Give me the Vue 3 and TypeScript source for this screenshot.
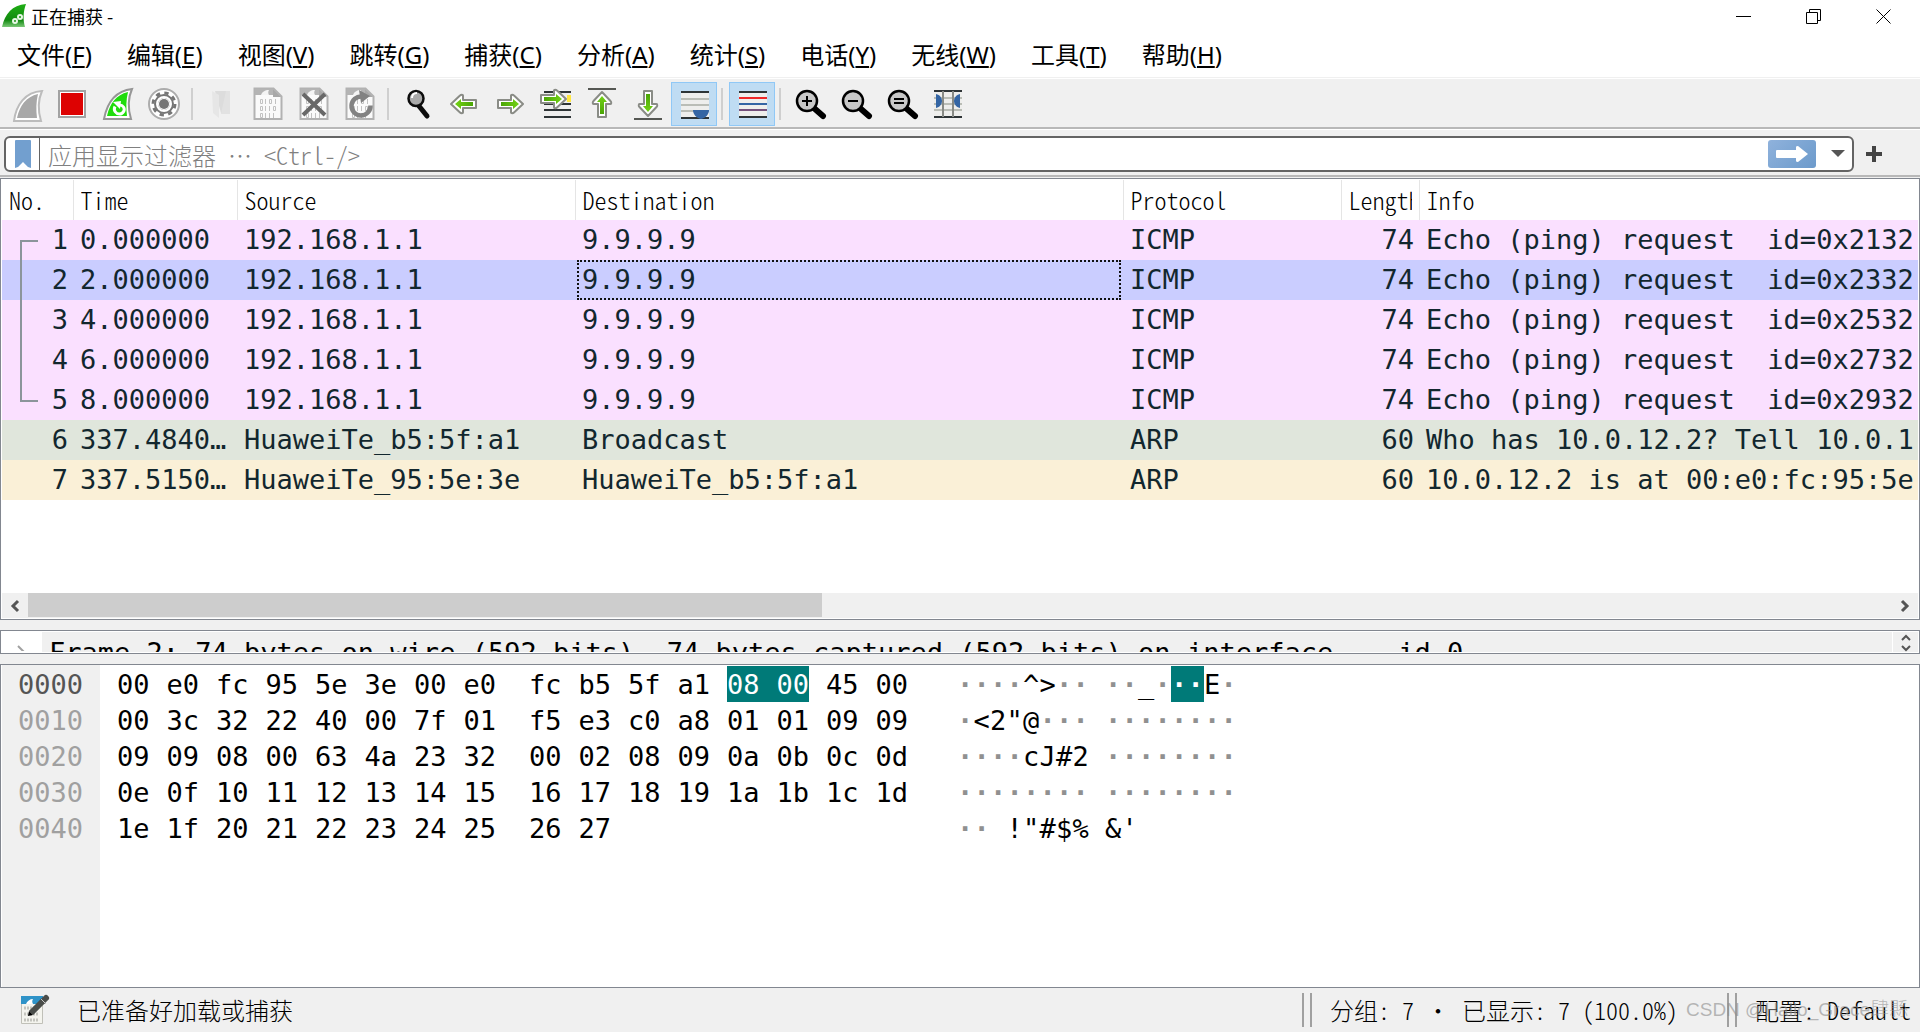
<script setup lang="ts">
interface Tool {
  id: string
  label: string
  art: string
  active?: boolean
  disabled?: boolean
}

interface Packet {
  no: number
  time: string
  source: string
  destination: string
  protocol: string
  length: number
  info: string
  tone: string
}

interface HexRow {
  offset: string
  bytes: string[][]
  text: string[][]
}

const menus = [
  ['文件', 'F'], ['编辑', 'E'], ['视图', 'V'], ['跳转', 'G'], ['捕获', 'C'], ['分析', 'A'],
  ['统计', 'S'], ['电话', 'Y'], ['无线', 'W'], ['工具', 'T'], ['帮助', 'H'],
]

const page = '<path d="M2.500 .5h19l8 8v22.500h-27z" fill="#fafafa" stroke="#b2b2b2" stroke-width="2"/><path d="M3 1h18v6H3z" fill="#b4b4b4"/><path d="M9 7c1-3 4-5 8-5-1 2-1 3 0 5z" fill="#f4f4f4"/><path d="M21 1v8h8z" fill="#a8a8a8"/>'
const bits = '<g fill="none" stroke="#c2c2c2" stroke-width="1"><path d="M8.500 11.500h2v4h-2zM13.500 11v5M17.500 11.500h2v4h-2zM23.500 11v5M8.500 18.500h2v4h-2zM13.500 18v5M17.500 18v5M21.500 18.500h2v4h-2zM8.500 25.500h2v4h-2zM13.500 25v5M17.500 25v5M21.500 25v5"/></g>'
const lens = '<path d="M21 21l8 7" stroke="#000" stroke-width="6" stroke-linecap="round"/><circle cx="13" cy="13" r="10" fill="#c8c8c8" stroke="#000" stroke-width="2.500"/>'
const rightArrow = (x: number, y: number): string =>
  `<g transform="translate(${x} ${y})"><path d="M1 6h13V1.500c0-1 2-1 3 0l9 8.500-9 8.500c-1 1-3 1-3 0V14H1z" fill="#fff" stroke="#8a8c86" stroke-width="2" stroke-linejoin="round"/><path d="M4 8h12V5l6 5-6 5v-3H4z" fill="url(#leaf)"/></g>`

const groups: Tool[][] = [
  [
    { id: 'start', label: '开始捕获分组', disabled: true, art: '<path d="M4 33C6 17 15 4 32 3c-4 9-4 20-1 30z" fill="#fff" stroke="#bcbcbc" stroke-width="2"/><path d="M7 30C10 17 16 9 28 6c-2 8-2 16-1 24z" fill="#a8a8a8"/>' },
    { id: 'stop', label: '停止捕获分组', art: '<path d="M3 3h26v26H3z" fill="#fff" stroke="#a2a2a2" stroke-width="2"/><path d="M5 5h22v22H5z" fill="#dd0202"/>' },
    { id: 'restart', label: '重新开始当前捕获', art: '<path d="M2 31C5 15 13 3 30 1c-4 9-4 20-1 30z" fill="#fff" stroke="#969696" stroke-width="2"/><path d="M5 28C8 15 14 7 26 4c-2 8-2 16-1 24z" fill="#1fdc0c"/><path d="M13 18.500c-2 4 1 7.500 4.500 7.500s6-4 4-7c-1-1.500-2-2-4-2" fill="none" stroke="#fff" stroke-width="3"/><path d="M11 14l8-1-1 8z" fill="#fff"/>' },
    { id: 'options', label: '捕获选项', art: '<circle cx="16" cy="16" r="15" fill="#fff" stroke="#acacac" stroke-width="2"/><circle cx="16" cy="16" r="8" fill="none" stroke="#767676" stroke-width="4"/><circle cx="16" cy="16" r="11" fill="none" stroke="#767676" stroke-width="3" stroke-dasharray="4.300 4.340"/><circle cx="16" cy="16" r="5" fill="#767676"/><circle cx="16" cy="16" r="7" fill="none" stroke="#fff" stroke-width="2"/>' },
  ],
  [
    { id: 'open', label: '打开', disabled: true, art: '<path d="M9 3h14v22h-8z" fill="#dcdcdc"/><path d="M6 3l7 4v23l-6-5z" fill="#e6e6e6"/><path d="M20 3h4v23h-9z" fill="#e2e2e2"/>' },
    { id: 'save', label: '保存', disabled: true, art: page + bits },
    { id: 'close', label: '关闭', art: page + bits + '<path d="M5 6l22 21M27 6L5 27" stroke="#686868" stroke-width="4"/>' },
    { id: 'reload', label: '重新加载', art: page + bits + '<path d="M18 8.500a9.500 9.500 0 1 0 8.500 9" fill="none" stroke="#828282" stroke-width="4.500"/><path d="M15 2l11 6-9 7z" fill="#828282"/>' },
  ],
  [
    { id: 'find', label: '查找分组', art: '<path d="M17 18l8 10" stroke="#0c0c0c" stroke-width="5" stroke-linecap="round"/><circle cx="14" cy="10.500" r="7.500" fill="#a9a9a9" stroke="#0c0c0c" stroke-width="2.500"/><path d="M10 10c0-3 2-5 5-5" fill="none" stroke="#fff" stroke-width="2"/>' },
    { id: 'back', label: '后退', art: `<g transform="translate(32 0) scale(-1 1)">${rightArrow(3, 6)}</g>` },
    { id: 'forward', label: '前进', art: rightArrow(3, 6) },
    { id: 'goto', label: '转到分组', art: '<path d="M4 3h27v26H4z" fill="#eee"/><path d="M27 7h4v7h-4z" fill="#ffe640"/><path d="M4 4h27M4 16h27M4 22h27M4 29h27" stroke="#2e3436" stroke-width="2"/>' + rightArrow(0, 1) },
    { id: 'first', label: '首个分组', art: `<path d="M2 1h28" stroke="#555753" stroke-width="2"/><g transform="matrix(0 -1 1 0 6 32)">${rightArrow(2, 0)}</g>` },
    { id: 'last', label: '最新分组', art: `<path d="M2 31h28" stroke="#555753" stroke-width="2"/><g transform="matrix(0 1 -1 0 26 0)">${rightArrow(2, 0)}</g>` },
    { id: 'autoscroll', label: '自动滚动', active: true, art: '<path d="M3 4h28v26H3z" fill="#eeeeec"/><path d="M3 11h28M3 17h28M3 23h28" stroke="#babdb6" stroke-width="2"/><path d="M3 4h28M3 30h28" stroke="#2e3436" stroke-width="2"/><path d="M15 22h16c0 4-3 8-8 9-5-1-8-5-8-9z" fill="#3465a4"/>' },
  ],
  [
    { id: 'colorize', label: '着色分组列表', active: true, art: '<path d="M3 4h28v25H3z" fill="#eeeeec"/><path d="M3 4h28M3 29h28" stroke="#2e3436" stroke-width="2"/><path d="M3 10h28" stroke="#ef2929" stroke-width="2"/><path d="M3 16h28" stroke="#3465a4" stroke-width="2"/><path d="M3 22h28" stroke="#75507b" stroke-width="2"/>' },
  ],
  [
    { id: 'zoomin', label: '放大', art: lens + '<path d="M13 8v10M8 13h10" stroke="#000" stroke-width="2"/>' },
    { id: 'zoomout', label: '缩小', art: lens + '<path d="M8 13h10" stroke="#000" stroke-width="2"/>' },
    { id: 'zoomreset', label: '正常大小', art: lens + '<path d="M8 11h10M8 15h10" stroke="#000" stroke-width="2"/>' },
    { id: 'resize', label: '调整列宽', art: '<path d="M2 3h28v26H2z" fill="#eeeeec"/><path d="M2 10h28M2 16h28M2 22h28" stroke="#babdb6" stroke-width="2"/><path d="M2 3h28M2 29h28" stroke="#2e3436" stroke-width="2"/><path d="M11 3v26M21 3v26" stroke="#888a85" stroke-width="2"/><path d="M4 6c4 1 6 4 6 7s-2 6-6 7zM28 6c-4 1-6 4-6 7s2 6 6 7z" fill="#3465a4"/>' },
  ],
]

const columns = [
  { key: 'no', label: 'No.' }, { key: 'time', label: 'Time' }, { key: 'source', label: 'Source' },
  { key: 'destination', label: 'Destination' }, { key: 'protocol', label: 'Protocol' },
  { key: 'length', label: 'Length' }, { key: 'info', label: 'Info' },
]

const ping = (no: number, time: string, id: string, tone: string): Packet => ({
  no, time, source: '192.168.1.1', destination: '9.9.9.9', protocol: 'ICMP', length: 74,
  info: `Echo (ping) request  id=${id}`, tone,
})

const packets: Packet[] = [
  ping(1, '0.000000', '0x2132', 'icmp flow flow-start'),
  ping(2, '2.000000', '0x2332', 'selected flow'),
  ping(3, '4.000000', '0x2532', 'icmp flow'),
  ping(4, '6.000000', '0x2732', 'icmp flow'),
  ping(5, '8.000000', '0x2932', 'icmp flow flow-end'),
  { no: 6, time: '337.4840…', source: 'HuaweiTe_b5:5f:a1', destination: 'Broadcast', protocol: 'ARP', length: 60, info: 'Who has 10.0.12.2? Tell 10.0.1', tone: 'broadcast' },
  { no: 7, time: '337.5150…', source: 'HuaweiTe_95:5e:3e', destination: 'HuaweiTe_b5:5f:a1', protocol: 'ARP', length: 60, info: '10.0.12.2 is at 00:e0:fc:95:5e', tone: 'arp' },
]

const row = (offset: string, left: string, right: string, a: string, b: string): HexRow => ({
  offset,
  bytes: [left.split(' '), right.split(' ')],
  text: [a.split(''), b.split('')],
})

const hexRows: HexRow[] = [
  row('0000', '00 e0 fc 95 5e 3e 00 e0', 'fc b5 5f a1 08 00 45 00', '····^>··', '··_···E·'),
  row('0010', '00 3c 32 22 40 00 7f 01', 'f5 e3 c0 a8 01 01 09 09', '·<2"@···', '········'),
  row('0020', '09 09 08 00 63 4a 23 32', '00 02 08 09 0a 0b 0c 0d', '····cJ#2', '········'),
  row('0030', '0e 0f 10 11 12 13 14 15', '16 17 18 19 1a 1b 1c 1d', '········', '········'),
  row('0040', '1e 1f 20 21 22 23 24 25', '26 27', '·· !"#$%', '&\''),
]

// The EtherType field: bytes 12 and 13 of the frame.
const marked = (r: number, g: number, i: number): boolean => r === 0 && g === 1 && (i === 4 || i === 5)

const visibleShare = 0.426
</script>

<template>
  <div class="window">
    <svg class="defs" width="0" height="0" aria-hidden="true">
      <defs>
        <linearGradient id="leaf" x1="0" y1="0" x2="1" y2="0">
          <stop offset="0" stop-color="#4aa505" /><stop offset="1" stop-color="#73d216" />
        </linearGradient>
        <linearGradient id="fin" x1="0" y1="0" x2="0" y2="1">
          <stop offset="0" stop-color="#1fae14" /><stop offset=".7" stop-color="#128a10" /><stop offset="1" stop-color="#7cc878" />
        </linearGradient>
      </defs>
    </svg>

    <header class="titlebar">
      <svg class="logo" width="24" height="24" viewBox="0 0 24 24" aria-hidden="true">
        <path d="M0 23C3 10 10 1 24 0c-3 8-3 16-1 23z" fill="url(#fin)" />
        <g fill="none" stroke="#e8f8e6" stroke-width="2"><circle cx="13" cy="17" r="2" /><circle cx="18" cy="13" r="2" /></g>
      </svg>
      <h1>正在捕获 -</h1>
      <div class="controls">
        <button type="button" aria-label="最小化"><svg width="16" height="16" viewBox="0 0 16 16"><path d="M0 7.500h15" stroke="#000" /></svg></button>
        <button type="button" aria-label="还原"><svg width="16" height="16" viewBox="0 0 16 16"><path d="M.5 3.500h11v11H.5zM3.500 3.500v-3h11v11h-3" fill="none" stroke="#000" /></svg></button>
        <button type="button" aria-label="关闭窗口"><svg width="16" height="16" viewBox="0 0 16 16"><path d="M.5 .5l14 14M14.500 .5l-14 14" stroke="#000" /></svg></button>
      </div>
    </header>

    <nav class="menubar">
      <button v-for="m in menus" :key="m[1]" type="button">{{ m[0] }}(<u>{{ m[1] }}</u>)</button>
    </nav>

    <div class="toolbar">
      <div v-for="(g, gi) in groups" :key="gi" class="group">
        <button v-for="t in g" :key="t.id" type="button" :aria-label="t.label" :disabled="t.disabled" :class="{ active: t.active }">
          <svg width="32" height="32" viewBox="0 0 32 32" v-html="t.art" />
        </button>
      </div>
    </div>

    <form class="filterbar" @submit.prevent>
      <div class="field">
        <button type="button" class="bookmark" aria-label="书签">
          <svg width="16" height="28" viewBox="0 0 16 28"><path d="M0 1q0-1 1-1h14q1 0 1 1v27l-3-1-5-5-5 5-3 1z" fill="#729fcf" /></svg>
        </button>
        <input type="text" aria-label="显示过滤器" placeholder="应用显示过滤器 ⋯ <Ctrl-/>">
        <button type="submit" class="apply" aria-label="应用">
          <svg width="32" height="16" viewBox="0 0 32 16"><path d="M1 4h19V1q0-1 2-1l10 8-10 8q-2 0-2-1v-3H1q-1 0-1-1V5q0-1 1-1z" fill="#fff" /></svg>
        </button>
        <button type="button" class="recent" aria-label="最近的过滤器">
          <svg width="14" height="8" viewBox="0 0 14 8"><path d="M0 0h14L7 7z" fill="#555" /></svg>
        </button>
      </div>
      <button type="button" class="add" aria-label="添加过滤器按钮">
        <svg width="16" height="16" viewBox="0 0 16 16"><path d="M8 0v16M0 8h16" stroke="#444" stroke-width="4" /></svg>
      </button>
    </form>

    <main>
      <section class="pane packets">
        <table class="list">
          <colgroup><col v-for="c in columns" :key="c.key" :class="'w-' + c.key"></colgroup>
          <thead>
            <tr><th v-for="c in columns" :key="c.key" scope="col"><div>{{ c.label }}</div></th></tr>
          </thead>
          <tbody>
            <tr v-for="p in packets" :key="p.no" :class="p.tone">
              <td class="num first">{{ p.no }}</td>
              <td>{{ p.time }}</td>
              <td>{{ p.source }}</td>
              <td class="dest">{{ p.destination }}</td>
              <td>{{ p.protocol }}</td>
              <td class="num">{{ p.length }}</td>
              <td>{{ p.info }}</td>
            </tr>
          </tbody>
        </table>
        <div class="hscroll">
          <button type="button" aria-label="向左滚动"><svg width="10" height="12" viewBox="0 0 10 12"><path d="M8 1L3 6l5 5" fill="none" stroke="#555" stroke-width="3" /></svg></button>
          <div class="track"><div class="thumb" :style="{ width: visibleShare * 100 + '%' }" /></div>
          <button type="button" aria-label="向右滚动"><svg width="10" height="12" viewBox="0 0 10 12"><path d="M2 1l5 5-5 5" fill="none" stroke="#555" stroke-width="3" /></svg></button>
        </div>
      </section>

      <section class="pane details">
        <svg class="twisty" width="40" height="19" viewBox="0 0 40 19" aria-hidden="true"><path d="M16 14l6 6" stroke="#a0a0a0" stroke-width="2" /></svg>
        <div class="frame">Frame 2: 74 bytes on wire (592 bits), 74 bytes captured (592 bits) on interface -, id 0</div>
        <div class="spin">
          <button type="button" aria-label="向上滚动"><svg width="10" height="6" viewBox="0 0 10 6"><path d="M1 5l4-4 4 4" fill="none" stroke="#555" stroke-width="2" /></svg></button>
          <button type="button" aria-label="向下滚动"><svg width="10" height="6" viewBox="0 0 10 6"><path d="M1 1l4 4 4-4" fill="none" stroke="#555" stroke-width="2" /></svg></button>
        </div>
      </section>

      <section class="pane hex">
        <table>
          <tbody>
            <tr v-for="(r, ri) in hexRows" :key="r.offset">
              <th scope="row" :class="{ current: ri === 0 }">{{ r.offset }}</th>
              <td class="bytes">
                <div class="halves">
                  <div v-for="(g, gi) in r.bytes" :key="gi" class="eight">
                    <span v-for="(b, bi) in g" :key="bi" :class="{ mark: marked(ri, gi, bi), tail: marked(ri, gi, bi) && bi === 5 }">{{ b }}</span>
                  </div>
                </div>
              </td>
              <td class="ascii">
                <div class="halves">
                  <div v-for="(g, gi) in r.text" :key="gi" class="eight">
                    <span v-for="(c, ci) in g" :key="ci" :class="{ dot: c === '·', mark: marked(ri, gi, ci) }">{{ c }}</span>
                  </div>
                </div>
              </td>
            </tr>
          </tbody>
        </table>
      </section>
    </main>

    <footer class="status">
      <button type="button" class="note" aria-label="捕获文件注释">
        <svg width="28" height="28" viewBox="0 0 28 28">
          <path d="M.5 .5h21v27H.5z" fill="#f4f4ee" stroke="#c0c0b8" /><path d="M0 0h22v8H0z" fill="#2f93c8" /><path d="M5 8c1-3 4-5 7-5-1 2-1 3 0 5z" fill="#fff" />
          <path d="M3 12h15M3 18h15M3 24h15" stroke="#c4c4be" stroke-width="3" stroke-dasharray="2 1" />
          <path d="M10 17L22 5" stroke="#4a4d4a" stroke-width="6" /><path d="M22 5l3-3" stroke="#4a4d4a" stroke-width="6" stroke-linecap="round" /><path d="M20 3l5 5" stroke="#c8c8c8" /><path d="M7 20l1-5 4 4z" fill="#000" />
        </svg>
      </button>
      <span class="ready">已准备好加载或捕获</span>
      <span class="cell counts">分组: 7 • 已显示: 7 (100.0%)</span>
      <span class="cell profile">配置: Default</span>
      <span class="credit">CSDN @Hallo_Grace肆縣</span>
    </footer>
  </div>
</template>

<style>
body {
  margin: 0;
}
</style>

<style scoped>
.window {
  display: flex;
  flex-direction: column;
  min-height: 100vh;
  background: #f0f0f0;
  color: #000;
  font-family: "Noto Sans CJK SC", sans-serif;
}
.defs {
  position: absolute;
}
button {
  display: flex;
  align-items: center;
  justify-content: center;
  margin: 0;
  padding: 0;
  border: 0;
  background: none;
  color: inherit;
  font: inherit;
}
svg {
  display: block;
  flex: none;
  overflow: visible;
}

.titlebar {
  display: flex;
  align-items: center;
  height: 32px;
  padding-left: 2px;
  background: #fff;
}
.titlebar h1 {
  margin: 0 auto 0 5px;
  font-size: 18px;
  line-height: 26px;
  font-weight: 400;
}
.controls {
  display: flex;
  margin-right: 1px;
}
.controls button {
  width: 70px;
  height: 32px;
  padding-top: 2px;
}

.menubar {
  display: flex;
  gap: 35px;
  height: 45px;
  padding: 0 17px;
  border-bottom: 1px solid #f0f0f0;
  background: #fff;
  font-family: "Noto Sans", "Noto Sans CJK SC", sans-serif;
  font-size: 24px;
  line-height: 45px;
}
.menubar button {
  white-space: nowrap;
}
.menubar u {
  text-underline-offset: 2px;
}

.toolbar {
  display: flex;
  align-items: center;
  height: 46px;
  padding: 2px 0 0 3px;
  border-top: 1px solid #fff;
  border-bottom: 2px solid #b8b8b8;
}
.group {
  display: flex;
}
.group + .group::before {
  content: "";
  width: 2px;
  height: 32px;
  margin: 6px 6px 0 4px;
  background: #cfcfcf;
}
.group button {
  box-sizing: border-box;
  width: 46px;
  height: 44px;
  border: 1px solid transparent;
}
.group button.active {
  border-color: #90c8f6;
  background: #bfdcf3;
}

.filterbar {
  display: flex;
  align-items: center;
  gap: 12px;
  height: 42px;
  padding: 3px 38px 0 4px;
  border-top: 1px solid #fff;
  border-bottom: 2px solid #b8b8b8;
}
.field {
  display: flex;
  flex: 1;
  align-items: center;
  box-sizing: border-box;
  height: 36px;
  border: 2px solid #646464;
  border-radius: 6px;
  background: #fff;
}
.bookmark {
  width: 34px;
  height: 32px;
  border-right: 1px solid #646464;
}
.field input {
  flex: 1;
  min-width: 0;
  height: 32px;
  padding: 0 8px;
  border: 0;
  outline: 0;
  background: none;
  font-family: "Noto Sans CJK SC", sans-serif;
  font-size: 24px;
  font-weight: 300;
  font-feature-settings: "hwid";
}
.field input::placeholder {
  color: #808080;
  opacity: 1;
}
.apply {
  width: 48px;
  height: 28px;
  border-radius: 3px;
  background: linear-gradient(135deg, #8fb2dc, #6c9acb);
}
.recent {
  width: 36px;
  height: 28px;
  padding-left: 8px;
}

main {
  display: flex;
  flex: 1;
  flex-direction: column;
  gap: 10px;
  margin-top: 1px;
}
.pane {
  box-sizing: border-box;
  padding: 1px;
  border: 1px solid #828790;
  background: #fff;
  overflow: hidden;
}
.packets {
  display: flex;
  flex-direction: column;
  height: 442px;
}
table {
  border-collapse: collapse;
  border-spacing: 0;
}
.list {
  width: 100%;
  table-layout: fixed;
  margin-bottom: auto;
}
.w-no { width: 71px; }
.w-time { width: 164px; }
.w-source { width: 338px; }
.w-destination { width: 548px; }
.w-protocol { width: 218px; }
.w-length { width: 78px; }
.list th {
  height: 40px;
  padding: 0 7px;
  border-right: 1px solid #e5e5e5;
  font-size: 24px;
  line-height: 38px;
  font-weight: 300;
  font-feature-settings: "hwid";
  text-align: left;
}
.list th:last-child {
  border-right: 0;
}
.list th div {
  overflow: hidden;
}
.list td {
  height: 40px;
  padding: 0 5px 0 7px;
  overflow: hidden;
  color: #12272e;
  font-family: "DejaVu Sans Mono", monospace;
  font-size: 27px;
  line-height: 38px;
  white-space: pre;
}
.list td.num {
  text-align: right;
}
.list td:last-child {
  padding-right: 0;
}
.icmp { background: #fae0ff; }
.selected { background: #cacdff; }
.broadcast { background: #e0e6dc; }
.arp { background: #faf0d7; }
.first,
.dest {
  position: relative;
}
.flow .first::before {
  content: "";
  position: absolute;
  inset: 0 auto 0 18px;
  width: 16px;
  border-left: 2px solid #8b959b;
}
.flow-start .first::before {
  top: 20px;
  border-top: 2px solid #8b959b;
}
.flow-end .first::before {
  bottom: 18px;
  border-bottom: 2px solid #8b959b;
}
.selected .dest::after {
  content: "";
  position: absolute;
  inset: 0 2px;
  border: 2px dotted #111;
}
.hscroll {
  display: flex;
  height: 25px;
  background: #f0f0f0;
}
.hscroll button {
  width: 26px;
}
.track {
  flex: 1;
}
.thumb {
  height: 24px;
  background: #cdcdcd;
}

.details {
  display: flex;
  height: 24px;
}
.twisty {
  overflow: hidden;
}
.frame {
  flex: 1;
  height: 20px;
  padding-left: 7px;
  overflow: hidden;
  background: #f0f0f0;
  font-family: "DejaVu Sans Mono", monospace;
  font-size: 27px;
  line-height: 41px;
  white-space: pre;
}
.spin {
  display: flex;
  flex-direction: column;
  width: 25px;
  border-left: 1px solid #fff;
  background: #f0f0f0;
}
.spin button {
  flex: 1;
  padding-top: 2px;
}

.hex {
  flex: 1;
  background: linear-gradient(to right, #fff 1px, #f0f0f0 1px 99px, #fff 99px);
  font-family: "DejaVu Sans Mono", monospace;
  font-size: 27px;
  line-height: 35px;
}
.hex th {
  width: 98px;
  padding: 1px 0 0 16px;
  box-sizing: border-box;
  color: #a0a0a0;
  font-weight: 400;
  text-align: left;
}
.hex th.current {
  color: #555;
}
.hex td {
  padding: 0 0 0 17px;
}
.halves {
  display: flex;
  gap: 16px;
}
.eight {
  display: grid;
  grid-template-columns: repeat(8, 1fr);
  height: 36px;
}
.bytes .eight {
  width: 396px;
}
.ascii .eight {
  width: 132px;
}
.hex td.ascii {
  padding-left: 32px;
}
.eight span {
  padding-top: 1px;
  white-space: pre;
}
.eight .dot {
  color: #909090;
  font-weight: 700;
}
.eight .mark {
  background: #007a78;
  color: #fff;
}
.eight .tail {
  justify-self: start;
}

.status {
  position: relative;
  display: flex;
  align-items: center;
  height: 44px;
  padding: 0 9px 0 21px;
  font-size: 24px;
  line-height: 34px;
  font-weight: 300;
  font-feature-settings: "hwid";
  white-space: pre;
}
.note {
  margin-right: 28px;
}
.ready {
  flex: 1;
}
.cell {
  display: flex;
}
.cell::before {
  content: "";
  width: 6px;
  height: 34px;
  margin-right: 18px;
  border: solid #a0a0a0;
  border-width: 0 2px;
}
.counts {
  margin-right: 49px;
}
.credit {
  position: absolute;
  right: 12px;
  color: #8c8c8c99;
  font-size: 19px;
  font-feature-settings: normal;
  font-family: "Liberation Sans", "Noto Sans CJK SC", sans-serif;
}
</style>
